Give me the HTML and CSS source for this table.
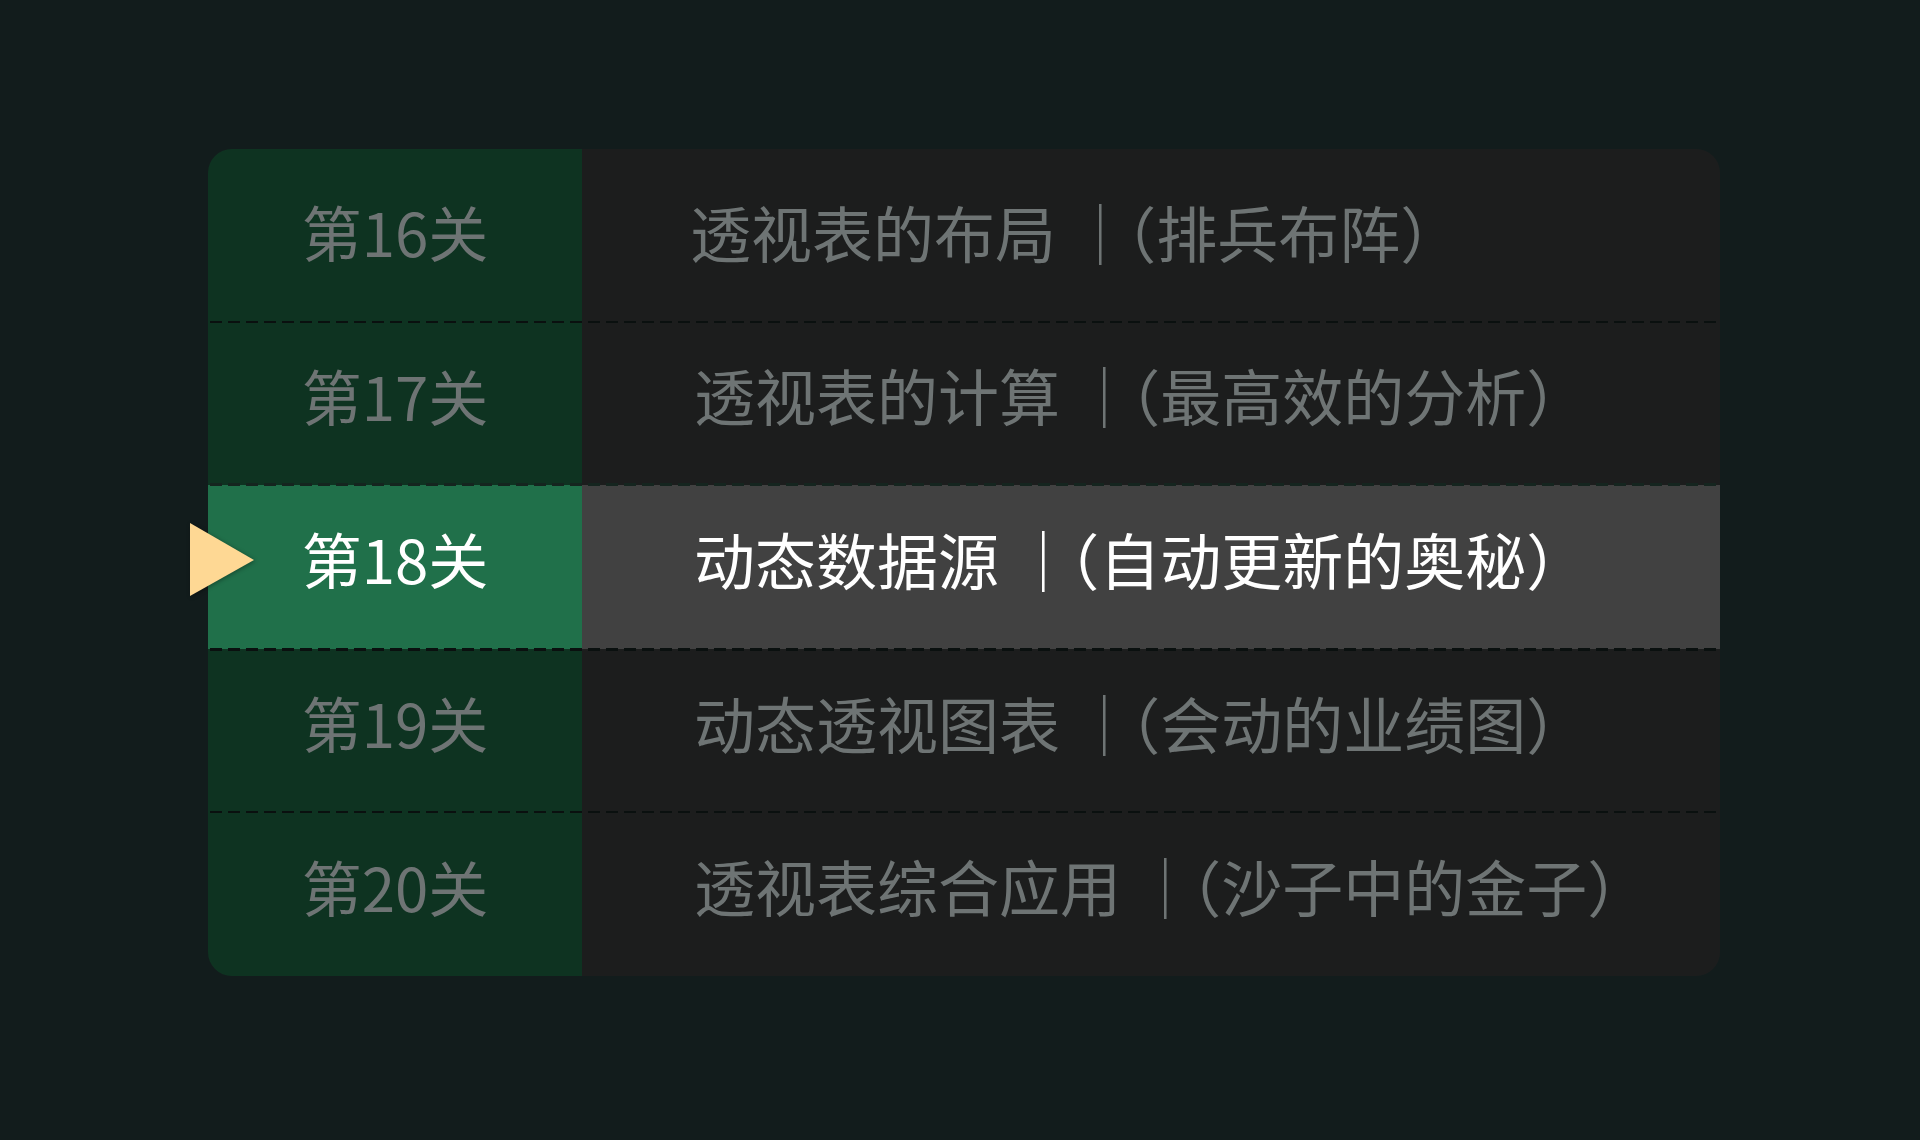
FILE: index.html
```html
<!DOCTYPE html>
<html lang="zh-CN">
<head>
<meta charset="utf-8">
<title>透视表课程</title>
<link rel="stylesheet" href="styles.css">
</head>
<body>
<main class="page">
  <section class="card">
    <div class="row">
      <div class="level">第16关</div>
      <div class="title first">透视表的布局 <span class="bar">｜</span><span class="paren">（</span>排兵布阵）</div>
    </div>
    <div class="row">
      <div class="level">第17关</div>
      <div class="title">透视表的计算 <span class="bar">｜</span><span class="paren">（</span>最高效的分析）</div>
    </div>
    <div class="row active">
      <svg class="pointer" width="66" height="76" viewBox="0 0 66 76"><polygon points="1,1 65,38 1,74" fill="#fed894"/></svg>
      <div class="level">第18关</div>
      <div class="title">动态数据源 <span class="bar">｜</span><span class="paren">（</span>自动更新的奥秘）</div>
    </div>
    <div class="row">
      <div class="level">第19关</div>
      <div class="title">动态透视图表 <span class="bar">｜</span><span class="paren">（</span>会动的业绩图）</div>
    </div>
    <div class="row">
      <div class="level">第20关</div>
      <div class="title">透视表综合应用 <span class="bar">｜</span><span class="paren">（</span>沙子中的金子）</div>
    </div>
  </section>
</main>
</body>
</html>
```
FILE: styles.css
```css
html, body {
  margin: 0;
  padding: 0;
}
body {
  background: #121c1c;
  width: 1920px;
  height: 1140px;
  font-family: "Noto Sans CJK SC", "Noto Sans", sans-serif;
}
.page {
  padding: 149px 0 0 208px;
}
.card {
  width: 1512px;
  height: 827px;
  box-sizing: border-box;
  padding-top: 9px;
  border-radius: 24px;
  background: linear-gradient(90deg, #0e3321 0 374px, #1c1d1d 374px);
  display: grid;
  grid-template-rows: repeat(5, 1fr);
}
.row {
  position: relative;
  display: grid;
  grid-template-columns: 374px 1fr;
  align-items: center;
  color: #6e7474;
  line-height: 1;
}
.row + .row::before {
  content: "";
  position: absolute;
  left: 2px;
  right: 2px;
  top: -1px;
  height: 2px;
  background: repeating-linear-gradient(90deg, #0a100f 0 12px, transparent 12px 18px);
  z-index: 2;
}
.row:first-child {
  margin-top: -9px;
  padding-top: 9px;
}
.level {
  font-size: 60px;
  text-align: center;
  padding-bottom: 17px;
}
.title {
  font-size: 61px;
  padding-left: 112px;
  padding-bottom: 17px;
  white-space: nowrap;
}
.title.first {
  padding-left: 108px;
}
.bar {
  letter-spacing: -5px;
}
.paren {
  font-feature-settings: "halt" 1;
}
.row.active {
  color: #ffffff;
  background: linear-gradient(90deg, #20704a 0 374px, #414141 374px);
}
.row.active::before {
  top: -2px;
  height: 3px;
  background: repeating-linear-gradient(90deg, #15251f 0 12px, transparent 12px 18px);
}
.row.active + .row::before {
  top: -1px;
  height: 3px;
}
.pointer {
  position: absolute;
  left: -19px;
  top: 37px;
  filter: drop-shadow(1px 1px 2px rgba(0, 0, 0, 0.35));
}
```
